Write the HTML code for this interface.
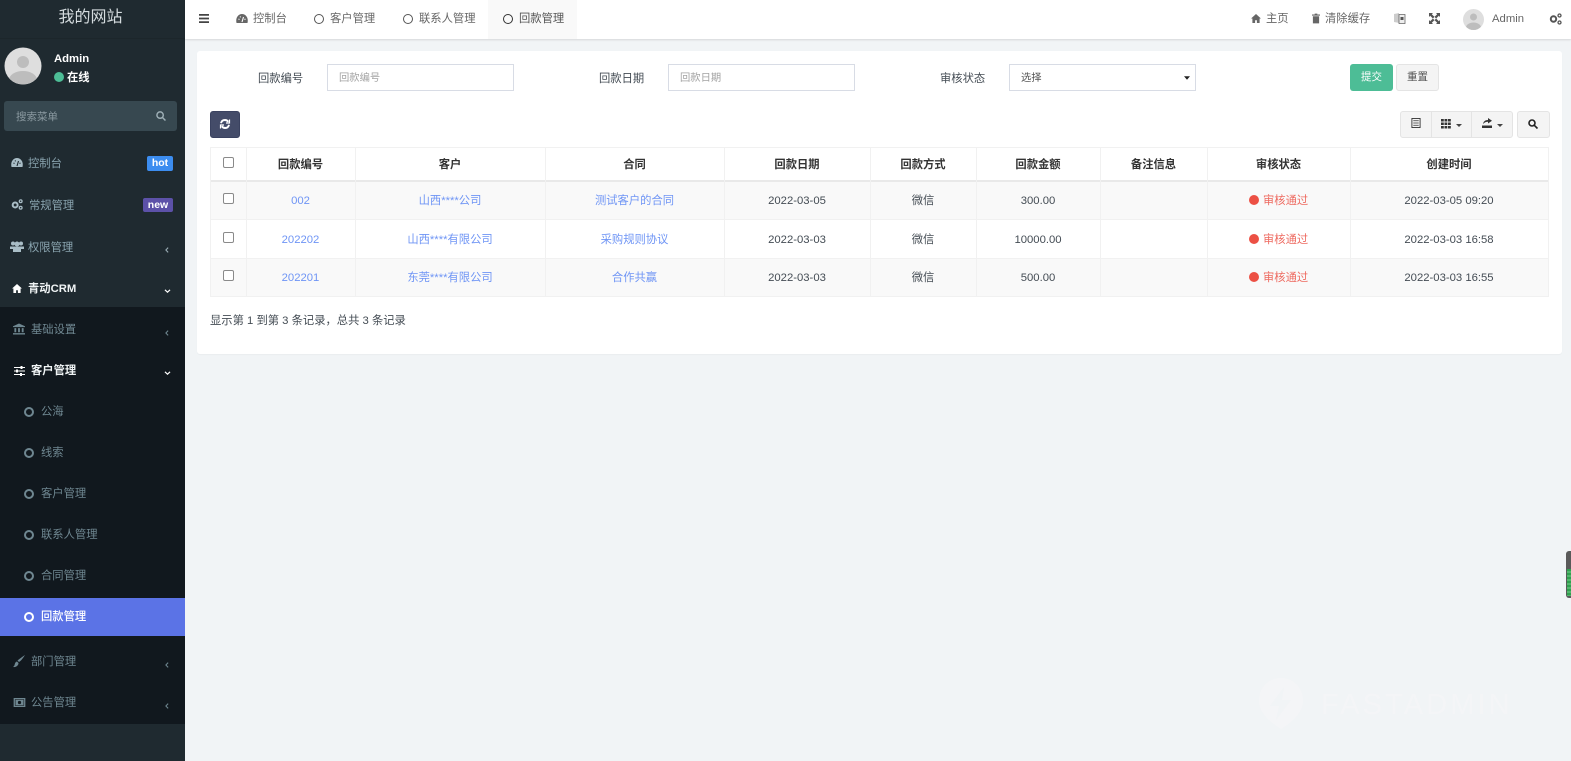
<!DOCTYPE html>
<html lang="zh"><head><meta charset="utf-8"><title>回款管理</title>
<style>
*{box-sizing:border-box}
html,body{margin:0;padding:0;width:1571px;height:761px;overflow:hidden;background:#f1f4f6;font:11.3px/14px "Liberation Sans","Noto Sans CJK SC",sans-serif;color:#444c54}
.a{position:absolute;white-space:nowrap}
.c{text-align:center}
svg{position:absolute;overflow:visible}
.s{color:#8aa4af}.d{color:#6f8791}
.th{font-weight:700;color:#333;text-align:center;top:158px}
.cell{text-align:center;color:#444c54}
.l{color:#6f95f5}
.v{position:absolute;top:148px;width:1px;height:148px;background:#f1f1f1}
.h{position:absolute;left:210px;width:1339px;height:1px;background:#f1f1f1}
.cb{position:absolute;left:223px;width:11px;height:11px;border:1px solid #8a8a8a;border-radius:2px;background:#fff}
.ring{position:absolute;width:10px;height:10px;border:2px solid #6f8791;border-radius:50%}
.inp{position:absolute;top:64px;height:27px;background:#fff;border:1px solid #d8dce5;color:#a3a3a3;padding:6.500px 10px 0 11px;font-size:10.3px}
.btn{position:absolute;background:#f4f4f4;border:1px solid #e4e4e4}
.dot{position:absolute;left:1249px;width:10px;height:10px;border-radius:50%;background:#ec5044}
.st{position:absolute;left:1263px;color:#ee6a60;white-space:nowrap}
</style></head><body>
<!-- sidebar -->
<div class="a" style="left:0;top:0;width:185px;height:761px;background:#1f2a30"></div>
<div class="a" style="left:0;top:38px;width:185px;height:1px;background:#1c262b"></div>
<div class="a c" style="left:0;top:8px;width:181px;font-size:16px;line-height:20px;color:#d5dcdf">我的网站</div>
<svg style="left:4px;top:47px" width="38" height="38" viewBox="0 0 38 38"><defs><clipPath id="av"><circle cx="19" cy="19" r="18.5"/></clipPath></defs><circle cx="19" cy="19" r="18.5" fill="#dedede"/><g clip-path="url(#av)" fill="#bdbdbd"><circle cx="19" cy="15" r="6"/><ellipse cx="19" cy="33" rx="14" ry="9"/></g></svg>
<div class="a" style="left:54px;top:52px;color:#fff;font-weight:700">Admin</div>
<div class="a" style="left:54px;top:72px;width:10px;height:10px;border-radius:50%;background:#4dbd96"></div>
<div class="a" style="left:67px;top:71px;color:#fff;font-weight:700">在线</div>
<div class="a" style="left:4px;top:101px;width:173px;height:30px;background:#374850;border-radius:3px"></div>
<div class="a" style="left:16px;top:110px;color:#8b9aa1;font-size:10.5px">搜索菜单</div>
<svg style="left:156px;top:111px" width="10" height="10" viewBox="0 0 11 11" fill="none" stroke="#9fb0b7" stroke-width="1.6"><circle cx="4.5" cy="4.5" r="3.5"/><path d="M7 7l3.4 3.4"/></svg>

<svg style="left:11px;top:158px" width="12" height="9" viewBox="0 0 12 9"><path d="M.5 9C-.8 3.500 2.500 0 6 0s6.800 3.500 5.500 9Z" fill="#a9bdc6"/><path d="M6 8l1.500-5M2.500 5l1 .5M9.500 5l-1 .5M4 2.500l.6.8" stroke="#1f2a30" stroke-width="1.100"/></svg>
<div class="a s" style="left:28px;top:157px">控制台</div>
<div class="a c" style="left:147px;top:156px;width:26px;height:15px;background:#3c8df0;border-radius:2px;color:#fff;font-weight:700;font-size:10.500px;line-height:14px">hot</div>

<svg style="left:11px;top:199px" width="12" height="11" viewBox="0 0 13 12" fill="none" stroke="#a9bdc6"><circle cx="4.500" cy="6.500" r="2.700" stroke-width="2.200"/><circle cx="10.500" cy="2.500" r="1.500" stroke-width="1.400"/><circle cx="10.500" cy="9.500" r="1.500" stroke-width="1.400"/></svg>
<div class="a s" style="left:29px;top:199px">常规管理</div>
<div class="a c" style="left:143px;top:198px;width:30px;height:14px;background:#5c51a8;border-radius:2px;color:#fff;font-weight:700;font-size:10.500px;line-height:14px">new</div>

<svg style="left:10px;top:241px" width="14" height="11" viewBox="0 0 14 11" fill="#a9bdc6"><circle cx="3" cy="2.500" r="2"/><circle cx="11" cy="2.500" r="2"/><circle cx="7" cy="3" r="2.500"/><path d="M0 8V5.500h14V8h-3v3H3V8Z"/></svg>
<div class="a s" style="left:28px;top:241px">权限管理</div>
<svg style="left:165px;top:247px" width="4" height="6" viewBox="0 0 5 8" fill="none" stroke="#9db0b8" stroke-width="1.400"><path d="M4 .8L1 4l3 3.200"/></svg>

<svg style="left:12px;top:284px" width="10" height="9" viewBox="0 0 11 10" fill="#fff"><path d="M5.500 0L11 5H9.500v5H6.500V7h-2v3h-3V5H0Z"/></svg>
<div class="a" style="left:28px;top:282px;font-weight:700;color:#f0f4f5">青动CRM</div>
<svg style="left:164px;top:289px" width="7" height="4" viewBox="0 0 8 5" fill="none" stroke="#fff" stroke-width="1.500"><path d="M.8 1L4 4l3.200-3"/></svg>

<div class="a" style="left:0;top:307px;width:185px;height:417px;background:#11181e"></div>
<svg style="left:13px;top:323px" width="12" height="12" viewBox="0 0 13 12" fill="#6f8791"><path d="M6.500 0L13 3v1H0V3ZM1.500 5h2v4.500h-2ZM5.500 5h2v4.500h-2ZM9.500 5h2v4.500h-2ZM0 10.500h13V12H0Z"/></svg>
<div class="a d" style="left:31px;top:323px">基础设置</div>
<svg style="left:165px;top:330px" width="4" height="6" viewBox="0 0 5 8" fill="none" stroke="#6f8791" stroke-width="1.400"><path d="M4 .8L1 4l3 3.200"/></svg>

<svg style="left:14px;top:366px" width="11" height="10" viewBox="0 0 11 10" fill="#fff"><path d="M0 1h11v1H0ZM0 4.500h11v1H0ZM0 8h11v1H0Z"/><path d="M6.500 0h2v3h-2ZM2 3.500h2v3H2ZM6 7h2v3H6Z"/></svg>
<div class="a" style="left:31px;top:364px;color:#f0f4f5;font-weight:700">客户管理</div>
<svg style="left:164px;top:371px" width="7" height="4" viewBox="0 0 8 5" fill="none" stroke="#fff" stroke-width="1.500"><path d="M.8 1L4 4l3.200-3"/></svg>

<div class="ring" style="left:24px;top:407px"></div><div class="a d" style="left:41px;top:405px">公海</div>
<div class="ring" style="left:24px;top:448px"></div><div class="a d" style="left:41px;top:446px">线索</div>
<div class="ring" style="left:24px;top:489px"></div><div class="a d" style="left:41px;top:487px">客户管理</div>
<div class="ring" style="left:24px;top:530px"></div><div class="a d" style="left:41px;top:528px">联系人管理</div>
<div class="ring" style="left:24px;top:571px"></div><div class="a d" style="left:41px;top:569px">合同管理</div>
<div class="a" style="left:0;top:598px;width:185px;height:38px;background:#5b73e6"></div>
<div class="ring" style="left:24px;top:612px;border-color:#fff"></div><div class="a" style="left:41px;top:610px;color:#fff;font-weight:500">回款管理</div>

<svg style="left:13px;top:655px" width="12" height="13" viewBox="0 0 12 13" fill="#6f8791"><path d="M12 0C10 3 8 6 6 7L4.500 5.500C7 3.500 9.500 1.500 12 0ZM4 6.500L5.500 8C5.500 10.500 3 12.500 0 12C1.500 11 1.500 10 2 8.500 2.300 7.500 3 6.800 4 6.500Z"/></svg>
<div class="a d" style="left:31px;top:655px">部门管理</div>
<svg style="left:165px;top:662px" width="4" height="6" viewBox="0 0 5 8" fill="none" stroke="#6f8791" stroke-width="1.400"><path d="M4 .8L1 4l3 3.200"/></svg>
<svg style="left:13px;top:698px" width="13" height="9" viewBox="0 0 13 10"><rect x=".7" y=".7" width="11.600" height="8.600" fill="none" stroke="#6f8791" stroke-width="1.400"/><rect x="2" y="2" width="9" height="6" fill="#6f8791"/><circle cx="6.500" cy="5" r="1.800" fill="#11181e"/></svg>
<div class="a d" style="left:31px;top:696px">公告管理</div>
<svg style="left:165px;top:703px" width="4" height="6" viewBox="0 0 5 8" fill="none" stroke="#6f8791" stroke-width="1.400"><path d="M4 .8L1 4l3 3.200"/></svg>

<!-- topbar -->
<div class="a" style="left:185px;top:0;width:1386px;height:39px;background:#fff;box-shadow:0 1px 2px rgba(0,0,0,.12)"></div>
<svg style="left:199px;top:14px" width="10" height="9" viewBox="0 0 10 9" fill="#444"><path d="M0 0h10v1.800H0ZM0 3.600h10v1.800H0ZM0 7.200h10V9H0Z"/></svg>
<svg style="left:236px;top:14px" width="12" height="9" viewBox="0 0 12 9"><path d="M.5 9C-.8 3.500 2.500 0 6 0s6.800 3.500 5.500 9Z" fill="#666"/><path d="M6 8l1.500-5M2.500 5l1 .5M9.500 5l-1 .5M4 2.500l.6.8" stroke="#fff" stroke-width="1.100"/></svg>
<div class="a" style="left:253px;top:12px;color:#666">控制台</div>
<div class="ring" style="left:314px;top:14px;border-color:#555;border-width:1.800px"></div><div class="a" style="left:330px;top:12px;color:#666">客户管理</div>
<div class="ring" style="left:403px;top:14px;border-color:#555;border-width:1.800px"></div><div class="a" style="left:419px;top:12px;color:#666">联系人管理</div>
<div class="a" style="left:488px;top:0;width:89px;height:39px;background:#f9f9f9"></div>
<div class="ring" style="left:503px;top:14px;border-color:#333;border-width:1.800px"></div><div class="a" style="left:519px;top:12px;color:#555">回款管理</div>

<svg style="left:1251px;top:14px" width="10" height="9" viewBox="0 0 11 10" fill="#666"><path d="M5.500 0L11 5H9.500v5H6.500V7h-2v3h-3V5H0Z"/></svg>
<div class="a" style="left:1266px;top:12px;color:#666">主页</div>
<svg style="left:1312px;top:13px" width="8" height="11" viewBox="0 0 9 11" fill="#666"><path d="M3 0h3v1h3v1.300H0V1h3ZM1 3h7v8H1Z"/></svg>
<div class="a" style="left:1325px;top:12px;color:#666">清除缓存</div>
<svg style="left:1394px;top:13px" width="11" height="11" viewBox="0 0 11 11"><path d="M0 1l5-1v10L0 9Z" fill="#ccc"/><path d="M5 1.500h6v9H5Z" fill="#eee" stroke="#666" stroke-width=".8"/><path d="M6.500 4h3v3h-3Z" fill="#555"/></svg>
<svg style="left:1429px;top:13px" width="11" height="11" viewBox="0 0 11 11" fill="#555"><path d="M0 0h4L2.800 1.200 5.500 3.900 3.900 5.500 1.200 2.800 0 4ZM11 0v4L9.800 2.800 7.100 5.500 5.500 3.900 8.200 1.200 7 0ZM0 11V7l1.200 1.200L3.900 5.500 5.500 7.100 2.800 9.800 4 11ZM11 11H7l1.200-1.200L5.500 7.100 7.100 5.500 9.800 8.200 11 7Z"/></svg>
<svg style="left:1463px;top:9px" width="21" height="21" viewBox="0 0 21 21"><defs><clipPath id="av2"><circle cx="10.500" cy="10.500" r="10.500"/></clipPath></defs><circle cx="10.500" cy="10.500" r="10.500" fill="#dedede"/><g clip-path="url(#av2)" fill="#bdbdbd"><circle cx="10.500" cy="8" r="3.500"/><ellipse cx="10.500" cy="18.500" rx="7.500" ry="5"/></g></svg>
<div class="a" style="left:1492px;top:12px;color:#666">Admin</div>
<svg style="left:1549px;top:13px" width="13" height="12" viewBox="0 0 13 12" fill="none" stroke="#555"><circle cx="4.500" cy="6" r="2.700" stroke-width="2"/><circle cx="10.500" cy="2.500" r="1.500" stroke-width="1.300"/><circle cx="10.500" cy="9.500" r="1.500" stroke-width="1.300"/></svg>

<!-- panel -->
<div class="a" style="left:197px;top:51px;width:1365px;height:303px;background:#fff;border-radius:3px;box-shadow:0 1px 1px rgba(0,0,0,.03)"></div>
<div class="a" style="left:258px;top:72px">回款编号</div>
<div class="inp" style="left:327px;width:187px">回款编号</div>
<div class="a" style="left:599px;top:72px">回款日期</div>
<div class="inp" style="left:668px;width:187px">回款日期</div>
<div class="a" style="left:940px;top:72px">审核状态</div>
<div class="inp" style="left:1009px;width:187px;color:#555">选择</div>
<svg style="left:1184px;top:76px" width="6" height="4" viewBox="0 0 7 4"><path d="M0 0h7L3.500 4Z" fill="#222"/></svg>
<div class="a c" style="left:1350px;top:64px;width:43px;height:27px;background:#4dbd96;border-radius:3px;color:#fff;line-height:27px;font-size:10.500px">提交</div>
<div class="btn c" style="left:1396px;top:64px;width:43px;height:27px;border-radius:3px;line-height:25px;font-size:10.500px;color:#555">重置</div>

<div class="a" style="left:210px;top:111px;width:30px;height:27px;background:#444c69;border-radius:3px;border:1px solid #3a4260"></div>
<svg style="left:220px;top:119px" width="10" height="10" viewBox="0 0 10 10" fill="none" stroke="#fff" stroke-width="1.900"><path d="M1 4.200C1.500 2 3 1 5 1c1.500 0 2.500.7 3.300 1.800M9 5.800C8.500 8 7 9 5 9 3.500 9 2.500 8.300 1.700 7.200"/><path d="M9.500 .5v3.500H6M.5 9.500V6H4" stroke-width="1.200"/></svg>

<div class="btn" style="left:1400px;top:111px;width:32px;height:27px;border-radius:3px 0 0 3px"></div>
<div class="btn" style="left:1431px;top:111px;width:41px;height:27px"></div>
<div class="btn" style="left:1471px;top:111px;width:42px;height:27px;border-radius:0 3px 3px 0"></div>
<div class="btn" style="left:1517px;top:111px;width:33px;height:27px;border-radius:3px"></div>
<svg style="left:1411px;top:118px" width="10" height="10" viewBox="0 0 10 11" fill="none" stroke="#333"><rect x=".5" y=".5" width="9" height="10"/><path d="M2 3h6M2 5.500h6M2 8h6" stroke-width=".9"/></svg>
<svg style="left:1441px;top:119px" width="10" height="10" viewBox="0 0 10 10" fill="#333"><path d="M0 0h2.800v2.500H0ZM3.500 0H6.300v2.500H3.500ZM7 0h2.800v2.500H7ZM0 3.500h2.800V6H0ZM3.500 3.500H6.300V6H3.500ZM7 3.500h2.800V6H7ZM0 7h2.800v2.500H0ZM3.500 7H6.300v2.500H3.500ZM7 7h2.800v2.500H7Z"/></svg>
<svg style="left:1456px;top:124px" width="6" height="3" viewBox="0 0 6 3"><path d="M0 0h6L3 3Z" fill="#444"/></svg>
<svg style="left:1482px;top:117px" width="10" height="11" viewBox="0 0 10 11" fill="#333"><path d="M0 8.500h10V11H0ZM1 7C1.500 4.500 3 3 6 3V1l4 2.800L6 6.500V4.800C4 4.800 2.500 5.500 1 7Z"/></svg>
<svg style="left:1497px;top:124px" width="6" height="3" viewBox="0 0 6 3"><path d="M0 0h6L3 3Z" fill="#444"/></svg>
<svg style="left:1528px;top:119px" width="10" height="10" viewBox="0 0 10 10" fill="none" stroke="#222" stroke-width="1.600"><circle cx="4" cy="4" r="3"/><path d="M6.300 6.300L9.500 9.500"/></svg>

<!-- table -->
<div class="a" style="left:210px;top:181px;width:1339px;height:39px;background:#f9f9f9"></div>
<div class="a" style="left:210px;top:258px;width:1339px;height:38px;background:#f9f9f9"></div>
<div class="h" style="top:147px"></div>
<div class="h" style="top:180px;height:1.500px;background:#e9e9e9"></div>
<div class="h" style="top:219px"></div><div class="h" style="top:258px"></div><div class="h" style="top:296px"></div>
<div class="v" style="left:210px"></div><div class="v" style="left:246px"></div><div class="v" style="left:355px"></div><div class="v" style="left:545px"></div><div class="v" style="left:724px"></div><div class="v" style="left:870px"></div><div class="v" style="left:976px"></div><div class="v" style="left:1100px"></div><div class="v" style="left:1207px"></div><div class="v" style="left:1350px"></div><div class="v" style="left:1548px"></div>

<div class="cb" style="top:157px"></div><div class="cb" style="top:193px"></div><div class="cb" style="top:232px"></div><div class="cb" style="top:270px"></div>

<div class="a th" style="left:246px;width:109px">回款编号</div>
<div class="a th" style="left:355px;width:190px">客户</div>
<div class="a th" style="left:545px;width:179px">合同</div>
<div class="a th" style="left:724px;width:146px">回款日期</div>
<div class="a th" style="left:870px;width:106px">回款方式</div>
<div class="a th" style="left:976px;width:124px">回款金额</div>
<div class="a th" style="left:1100px;width:107px">备注信息</div>
<div class="a th" style="left:1207px;width:143px">审核状态</div>
<div class="a th" style="left:1350px;width:198px">创建时间</div>

<div class="a cell l" style="left:246px;width:109px;top:194px">002</div>
<div class="a cell l" style="left:355px;width:190px;top:194px">山西****公司</div>
<div class="a cell l" style="left:545px;width:179px;top:194px">测试客户的合同</div>
<div class="a cell" style="left:724px;width:146px;top:194px">2022-03-05</div>
<div class="a cell" style="left:870px;width:106px;top:194px">微信</div>
<div class="a cell" style="left:976px;width:124px;top:194px">300.00</div>
<div class="dot" style="top:195px"></div><div class="st" style="top:194px">审核通过</div>
<div class="a cell" style="left:1350px;width:198px;top:194px">2022-03-05 09:20</div>

<div class="a cell l" style="left:246px;width:109px;top:233px">202202</div>
<div class="a cell l" style="left:355px;width:190px;top:233px">山西****有限公司</div>
<div class="a cell l" style="left:545px;width:179px;top:233px">采购规则协议</div>
<div class="a cell" style="left:724px;width:146px;top:233px">2022-03-03</div>
<div class="a cell" style="left:870px;width:106px;top:233px">微信</div>
<div class="a cell" style="left:976px;width:124px;top:233px">10000.00</div>
<div class="dot" style="top:234px"></div><div class="st" style="top:233px">审核通过</div>
<div class="a cell" style="left:1350px;width:198px;top:233px">2022-03-03 16:58</div>

<div class="a cell l" style="left:246px;width:109px;top:271px">202201</div>
<div class="a cell l" style="left:355px;width:190px;top:271px">东莞****有限公司</div>
<div class="a cell l" style="left:545px;width:179px;top:271px">合作共赢</div>
<div class="a cell" style="left:724px;width:146px;top:271px">2022-03-03</div>
<div class="a cell" style="left:870px;width:106px;top:271px">微信</div>
<div class="a cell" style="left:976px;width:124px;top:271px">500.00</div>
<div class="dot" style="top:272px"></div><div class="st" style="top:271px">审核通过</div>
<div class="a cell" style="left:1350px;width:198px;top:271px">2022-03-03 16:55</div>

<div class="a" style="left:210px;top:313.500px">显示第 1 到第 3 条记录，总共 3 条记录</div>

<!-- watermark -->
<svg style="left:1259px;top:678px" width="44" height="51" viewBox="0 0 44 51"><path d="M22 0C34 0 44 9 44 23C44 36 30 46 22 51C14 46 0 36 0 23C0 9 10 0 22 0Z" fill="#f4f5f7"/><path d="M25 9L11 28h9l-3 14L32 22h-9Z" fill="#f1f4f6"/></svg>
<div class="a" style="left:1321px;top:688px;font-size:29px;line-height:34px;color:#f4f5f7;letter-spacing:3.100px">FASTADMIN</div>

<!-- side widget -->
<div class="a" style="left:1566px;top:551px;width:5px;height:47px;background:#5a5a5a;border-radius:3px 0 0 3px"></div>
<div class="a" style="left:1567px;top:569px;width:4px;height:27px;background:repeating-linear-gradient(#2fa14f 0 2px,#55b56f 2px 4px)"></div>
</body></html>
